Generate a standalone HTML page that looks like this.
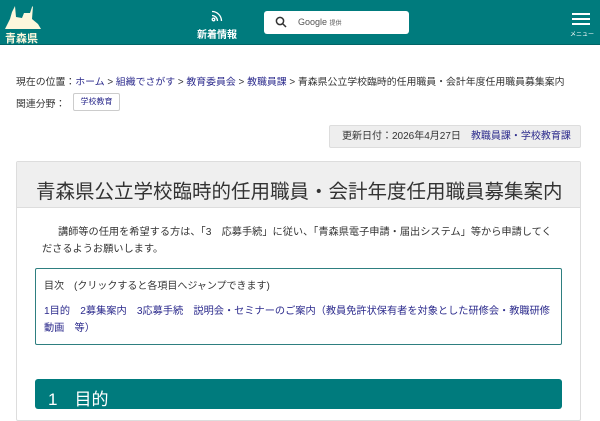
<!DOCTYPE html>
<html><head><meta charset="utf-8"><style>
*{margin:0;padding:0;box-sizing:border-box}
body{width:600px;height:400px;overflow:hidden;background:#fff;font-family:"Liberation Sans","Noto Sans CJK JP",sans-serif;color:#333;position:relative}
.a{position:absolute}
.hd{left:0;top:0;width:600px;height:45px;background:#007b7d;border-bottom:1px solid #006466}
a,.lk{color:#2b2a8c;text-decoration:none}
</style></head><body>
<div class="a hd"></div>
<svg class="a" style="left:4px;top:4px" width="38" height="26" viewBox="0 0 38 26"><path d="M1 25 L6 15 L8 8 L11 2 L12 13 L18 14 L20 9 L26 9 L28 3 L29 2 L28 15 L34 20 L37 25 Z" fill="#fdf7dc"/></svg>
<div class="a" style="left:5px;top:30px;font-size:11px;font-weight:bold;color:#fdf7dc">青森県</div>
<svg class="a" style="left:211px;top:10px" width="12" height="12" viewBox="0 0 12 12" fill="none" stroke="#fff" stroke-width="1.3"><circle cx="2.5" cy="9.5" r="1.3"/><path d="M1 5.5a5.5 5.5 0 0 1 5.5 5.5M1 1.5a9.5 9.5 0 0 1 9.5 9.5"/></svg>
<div class="a" style="left:197px;top:26px;font-size:10px;font-weight:bold;color:#fff">新着情報</div>
<div class="a" style="left:264px;top:11px;width:145px;height:23px;background:#fff;border-radius:3px"></div>
<svg class="a" style="left:275px;top:16px" width="12" height="12" viewBox="0 0 12 12" fill="none" stroke="#333" stroke-width="1.5"><circle cx="5" cy="5" r="3.6"/><path d="M7.6 7.6L11 11"/></svg>
<div class="a" style="left:298px;top:17px;font-size:9px;color:#555">Google <span style="font-size:6px">提供</span></div>
<div class="a" style="left:572px;top:13px;width:18px;height:2px;background:#fff;box-shadow:0 5px 0 #fff,0 10px 0 #fff"></div>
<div class="a" style="left:570px;top:29px;font-size:6px;color:#fff">メニュー</div>

<div class="a" style="left:16px;top:74px;font-size:9.9px;white-space:nowrap">現在の位置：<a>ホーム</a> &gt; <a>組織でさがす</a> &gt; <a>教育委員会</a> &gt; <a>教職員課</a> &gt; 青森県公立学校臨時的任用職員・会計年度任用職員募集案内</div>
<div class="a" style="left:16px;top:96px;font-size:9.9px">関連分野：</div>
<div class="a" style="left:73px;top:93px;width:47px;height:18px;border:1px solid #ccc;border-radius:2px;font-size:8px;line-height:16px;text-align:center;color:#2b2a8c">学校教育</div>
<div class="a" style="left:329px;top:125px;width:252px;height:23px;background:#eee;border:1px solid #ddd;border-radius:2px;font-size:10px;line-height:21px;padding-left:12px;white-space:nowrap">更新日付：2026年4月27日　<span class="lk">教職員課・学校教育課</span></div>
<div class="a" style="left:16px;top:161px;width:565px;height:260px;border:1px solid #ddd;border-radius:2px"></div>
<div class="a" style="left:17px;top:162px;width:563px;height:46px;background:#efefef;border-bottom:1px solid #ddd"></div>
<div class="a" style="left:36px;top:175px;font-size:19.5px;color:#333;white-space:nowrap">青森県公立学校臨時的任用職員・会計年度任用職員募集案内</div>
<div class="a" style="left:42px;top:224px;font-size:10.2px;line-height:17px;white-space:nowrap"><span style="margin-left:16px"></span>講師等の任用を希望する方は、「3　応募手続」に従い、「青森県電子申請・届出システム」等から申請してく<br>ださるようお願いします。</div>
<div class="a" style="left:35px;top:268px;width:527px;height:77px;border:1.5px solid #2e7f80;border-radius:2px"></div>
<div class="a" style="left:44px;top:277px;font-size:10px">目次　(クリックすると各項目へジャンプできます)</div>
<div class="a lk" style="left:44px;top:303px;width:510px;font-size:10.2px;line-height:17px">1目的　2募集案内　3応募手続　説明会・セミナーのご案内（教員免許状保有者を対象とした研修会・教職研修動画　等）</div>
<div class="a" style="left:35px;top:379px;width:527px;height:30px;background:#007b7d;border-radius:3px"></div>
<div class="a" style="left:48px;top:385px;font-size:17px;color:#fff">1　目的</div>
</body></html>
